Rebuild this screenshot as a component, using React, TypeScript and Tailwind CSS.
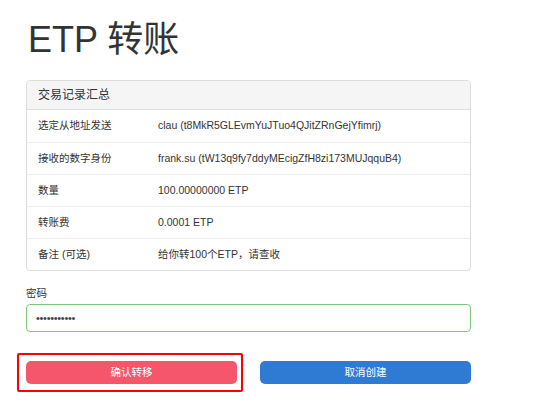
import React from 'react';

const rows = [
  { label: '选定从地址发送', value: 'clau (t8MkR5GLEvmYuJTuo4QJitZRnGejYfimrj)' },
  { label: '接收的数字身份', value: 'frank.su (tW13q9fy7ddyMEcigZfH8zi173MUJqquB4)' },
  { label: '数量', value: '100.00000000 ETP' },
  { label: '转账费', value: '0.0001 ETP' },
  { label: '备注 (可选)', value: '给你转100个ETP，请查收' },
];

const font = { fontFamily: '"Liberation Sans", Arial, "Noto Sans CJK SC", sans-serif' };

export default function App() {
  return (
    <div className="w-[554px] h-[408px] bg-white text-[#333] pl-[26px] pt-[20px]" style={font}>
      <h1 className="text-[36px] leading-[40px] font-normal text-[#333] mb-[20px] pl-[2px]">ETP 转账</h1>

      <div className="w-[445px] border border-[#ddd] rounded-[4px] overflow-hidden">
        <div className="h-[29px] bg-[#f5f5f5] border-b border-[#ddd] flex items-center px-[11px] text-[12px]">
          交易记录汇总
        </div>
        {rows.map((r, i) => (
          <div
            key={r.label}
            className={`h-[32px] flex items-center px-[11px] text-[10.5px] ${i > 0 ? 'border-t border-[#eee]' : ''}`}
          >
            <div className="w-[120px] shrink-0">{r.label}</div>
            <div>{r.value}</div>
          </div>
        ))}
      </div>

      <div className="mt-[15px] text-[10.5px] leading-[14px] mb-[4px]">密码</div>
      <div className="w-[445px] h-[28px] border border-[#7cc77c] rounded-[4px] flex items-center px-[9px]">
        <span className="text-[11px] tracking-[-0.3px] text-[#444] leading-none">•••••••••••</span>
      </div>

      <div className="mt-[29px] w-[445px] flex gap-[23px] text-[10.5px]">
        <div className="relative">
          <button className="w-[211px] h-[23px] rounded-[5px] bg-[#f5566c] text-white">确认转移</button>
          <span className="absolute left-[-9px] right-[-6px] top-[-8px] bottom-[-8px] border-2 border-[#f00] rounded-[2px] pointer-events-none" />
        </div>
        <button className="w-[211px] h-[23px] rounded-[5px] bg-[#2f7bd3] text-white">取消创建</button>
      </div>
    </div>
  );
}
